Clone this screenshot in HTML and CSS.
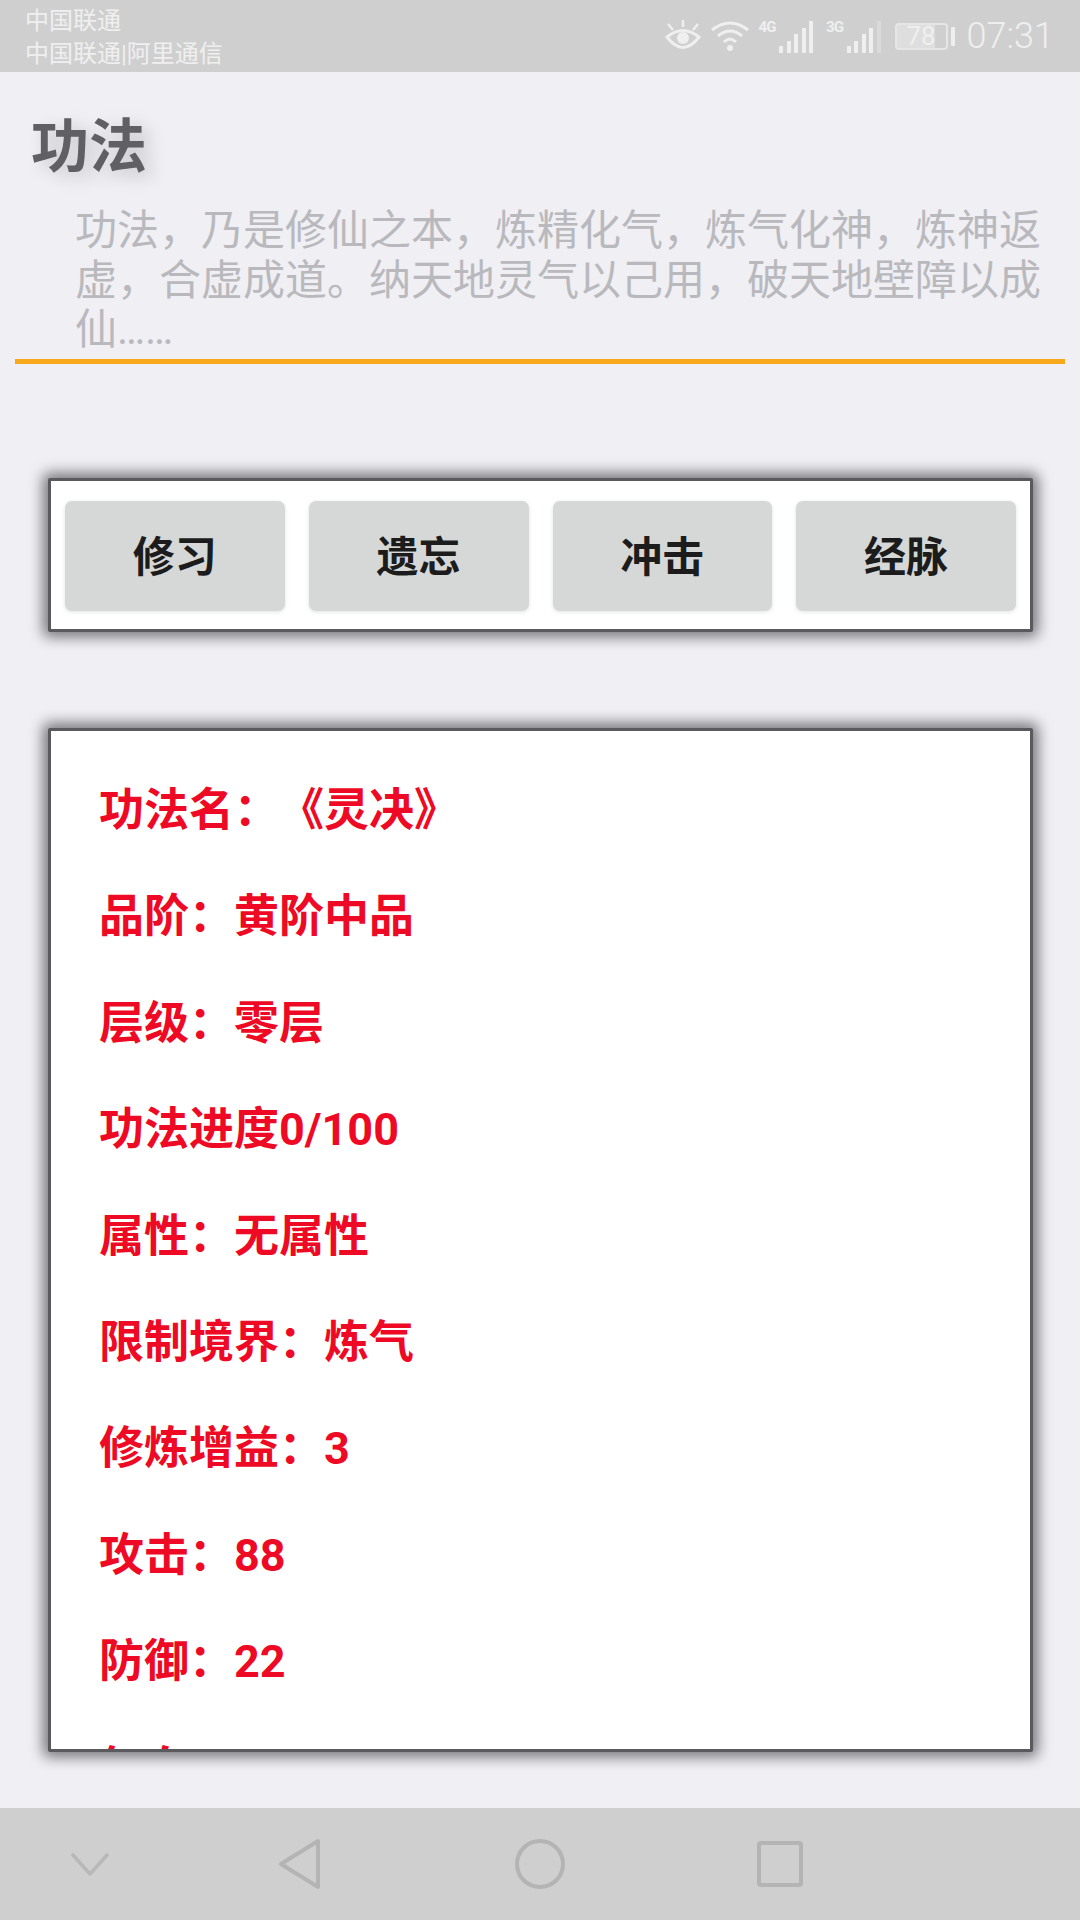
FILE: index.html
```html
<!DOCTYPE html>
<html lang="zh">

<head>
    <meta charset="UTF-8">
    <title>功法</title>
    <link rel="stylesheet" href="styles.css">
</head>

<body>
    <div class="status-bar">
        <div class="carrier">
            <div>中国联通</div>
            <div>中国联通|阿里通信</div>
        </div>
        <div class="status-right">
            <svg class="icon-eye" width="36" height="32" viewBox="0 0 36 32">
                <path d="M2 17 Q18 4 34 17 Q18 38 2 17 Z" fill="none" stroke="#efefef" stroke-width="3"/>
                <circle cx="18" cy="18" r="6" fill="#efefef"/>
                <path d="M18 0 V7 M3 4 L8 10 M33 4 L28 10" stroke="#efefef" stroke-width="2.5"/>
            </svg>
            <svg class="icon-wifi" width="40" height="32" viewBox="0 0 40 32">
                <path d="M2 10 Q20 -4 38 10 M8 16 Q20 6 32 16 M14 22 Q20 16 26 22" fill="none" stroke="#efefef" stroke-width="3"/>
                <circle cx="20" cy="28" r="3" fill="#efefef"/>
            </svg>
            <div class="signal">
                <span class="net">4G</span>
                <i class="bar h1"></i><i class="bar h2"></i><i class="bar h3"></i><i class="bar h4"></i><i class="bar h5"></i>
            </div>
            <div class="signal second">
                <span class="net">3G</span>
                <i class="bar h1"></i><i class="bar h2"></i><i class="bar h3"></i><i class="bar h4"></i><i class="bar h5 dim"></i>
            </div>
            <div class="battery">
                <div class="battery-body">78</div>
                <div class="battery-tip"></div>
            </div>
            <div class="clock">07:31</div>
        </div>
    </div>

    <div class="header">
        <h1 class="title">功法</h1>
        <p class="desc">功法，乃是修仙之本，炼精化气，炼气化神，炼神返虚，合虚成道。纳天地灵气以己用，破天地壁障以成仙……</p>
    </div>

    <div class="panel actions">
        <button class="btn">修习</button>
        <button class="btn">遗忘</button>
        <button class="btn">冲击</button>
        <button class="btn">经脉</button>
    </div>

    <div class="panel info">
        <p>功法名<span class="punct">：《</span>灵决<span class="punct">》</span></p>
        <p>品阶<span class="punct">：</span>黄阶中品</p>
        <p>层级<span class="punct">：</span>零层</p>
        <p>功法进度0/100</p>
        <p>属性<span class="punct">：</span>无属性</p>
        <p>限制境界<span class="punct">：</span>炼气</p>
        <p>修炼增益<span class="punct">：</span>3</p>
        <p>攻击<span class="punct">：</span>88</p>
        <p>防御<span class="punct">：</span>22</p>
        <p>气血<span class="punct">：</span>10</p>
    </div>

    <div class="nav-bar">
        <svg width="44" height="36" viewBox="0 0 44 36">
            <path d="M4 8 L22 28 L40 8" fill="none" stroke="#b8b8b8" stroke-width="3.5" stroke-linejoin="round"/>
        </svg>
        <svg width="44" height="52" viewBox="0 0 44 52">
            <path d="M40 3 V49 L3 26 Z" fill="none" stroke="#b4b4b4" stroke-width="4" stroke-linejoin="round"/>
        </svg>
        <svg width="50" height="52" viewBox="0 0 50 52">
            <circle cx="25" cy="26" r="23" fill="none" stroke="#b4b4b4" stroke-width="4"/>
        </svg>
        <svg width="46" height="46" viewBox="0 0 46 46">
            <rect x="2" y="2" width="42" height="42" rx="2" fill="none" stroke="#b4b4b4" stroke-width="4"/>
        </svg>
    </div>
</body>

</html>
```

FILE: styles.css
```css
* {
    box-sizing: border-box;
}

html,
body {
    margin: 0;
    padding: 0;
}

body {
    width: 1080px;
    height: 1920px;
    overflow: hidden;
    background: #efeff4;
    font-family: Roboto, "Noto Sans CJK SC", sans-serif;
    text-spacing-trim: space-all;
    display: flex;
    flex-direction: column;
}

.status-bar {
    height: 72px;
    flex: none;
    background: #cfcfcf;
    color: #efefef;
    display: flex;
    justify-content: space-between;
    align-items: center;
    padding: 0 26px 0 25px;
}

.carrier {
    font-size: 24px;
    line-height: 33px;
    margin-top: 3px;
}

.status-right {
    display: flex;
    align-items: center;
}

.icon-eye {
    margin-right: 9px;
}

.icon-wifi {
    margin-right: 9px;
}

.signal {
    display: flex;
    align-items: flex-end;
    gap: 3.5px;
    height: 33px;
}

.signal.second {
    margin-left: 13px;
}

.net {
    width: 17px;
    font-size: 15px;
    line-height: 15px;
    font-weight: 700;
    letter-spacing: -1px;
    align-self: flex-start;
}

.bar {
    display: block;
    width: 4px;
    background: #efefef;
}

.bar.h1 { height: 7px; }
.bar.h2 { height: 12px; }
.bar.h3 { height: 19px; }
.bar.h4 { height: 25px; }
.bar.h5 { height: 32px; }
.bar.dim { background: #dadada; }

.battery {
    display: flex;
    align-items: center;
    margin-left: 14px;
}

.battery-body {
    width: 53px;
    height: 27px;
    border: 2px solid #e6e6e6;
    border-radius: 4px;
    background: linear-gradient(to right, #dedede 78%, transparent 78%);
    font-size: 26px;
    line-height: 23px;
    text-align: center;
}

.battery-tip {
    width: 4px;
    height: 19px;
    margin-left: 3px;
    background: #efefef;
    border-radius: 1px;
}

.clock {
    font-size: 36px;
    font-weight: 300;
    margin-left: 12px;
}

.header {
    flex: none;
    margin: 0 15px;
    height: 292px;
    border-bottom: 5px solid #f7a81b;
}

.title {
    margin: 0;
    padding: 41px 0 0 16px;
    font-size: 58px;
    line-height: 68px;
    font-weight: 700;
    color: #606064;
    text-shadow: 8px 6px 18px rgba(0, 0, 0, 0.18);
}

.desc {
    margin: 0;
    padding: 25px 15px 0 60px;
    font-size: 42px;
    line-height: 49.5px;
    color: #b9b9bd;
}

.panel {
    margin: 0 47px 0 48px;
    flex: none;
    background: #fff;
    border: 3px solid #5a5a5e;
    border-radius: 2px;
    box-shadow: 0 0 14px 5px rgba(0, 0, 0, 0.5);
}

.actions {
    margin-top: 114px;
    height: 154px;
    display: flex;
    gap: 24px;
    padding: 20px 14px;
}

.btn {
    flex: 1;
    height: 110px;
    border: 0;
    border-radius: 7px;
    background: #d6d8d8;
    box-shadow: 0 1px 4px rgba(0, 0, 0, 0.12);
    color: #1c1c1c;
    font-family: inherit;
    font-size: 42px;
    font-weight: 700;
    padding: 0 0 5px;
}

.info {
    margin-top: 96px;
    height: 1024px;
    overflow: hidden;
    padding: 50px 0 0 48px;
    color: #ee0a24;
    font-size: 45px;
    font-weight: 700;
}

.info p {
    margin: 0;
    height: 106.4px;
    line-height: 60px;
}

/* centred punctuation, the SC glyphs sit off to one side of the cell */
.punct {
    font-family: "Noto Sans CJK TC", sans-serif;
    line-height: 0;
}

.nav-bar {
    margin-top: auto;
    height: 112px;
    flex: none;
    background: #cfcfcf;
    display: grid;
    grid-template-columns: 180px 240px 240px 240px;
    justify-items: center;
    align-items: center;
}
```
